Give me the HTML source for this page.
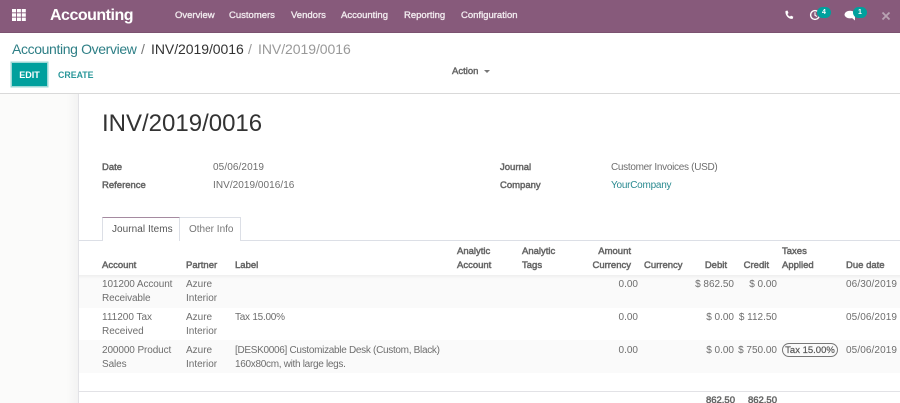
<!DOCTYPE html>
<html><head><meta charset="utf-8">
<style>
html,body{margin:0;padding:0}
body{width:900px;height:403px;overflow:hidden;background:#fff;position:relative;font-family:"Liberation Sans",sans-serif;font-size:10px;color:#666}
#r{position:absolute;left:0;top:0;width:900px;height:403px;overflow:hidden;filter:blur(.3px)}
.t{position:absolute;white-space:nowrap;line-height:14px}
.b{position:absolute;}
.n{color:#f1eaee;font-size:9.5px;-webkit-text-stroke:.35px #f1eaee;top:9px}
.h{color:#666;font-size:9.5px;-webkit-text-stroke:.5px #666}
.ra{text-align:right}
.l{color:#6e6e6e;font-size:10px}
.bd{position:absolute;background:#00a09d;color:#fff;border-radius:7px;font-size:7px;font-weight:bold;text-align:center;line-height:11px;height:11px;width:14px}
.bc{font-size:14px;line-height:17px;top:41px}
</style></head><body><div id="r">
<div class="b" style="left:0;top:0;width:900px;height:32px;background:#875a7b;border-bottom:1px solid #7b5270"></div>
<svg class="b" style="left:12px;top:9px" width="14" height="12"><g fill="#fff"><rect x="0" y="0" width="4" height="3.4"/><rect x="4.9" y="0" width="4" height="3.4"/><rect x="9.8" y="0" width="4" height="3.4"/><rect x="0" y="4.3" width="4" height="3.4"/><rect x="4.9" y="4.3" width="4" height="3.4"/><rect x="9.8" y="4.3" width="4" height="3.4"/><rect x="0" y="8.6" width="4" height="3.4"/><rect x="4.9" y="8.6" width="4" height="3.4"/><rect x="9.8" y="8.6" width="4" height="3.4"/></g></svg>
<div class="t" style="left:50px;top:8px;font-size:16px;font-weight:bold;color:#fff;line-height:16px;letter-spacing:-.5px">Accounting</div>
<div class="t n" style="left:175px">Overview</div>
<div class="t n" style="left:229px">Customers</div>
<div class="t n" style="left:291px">Vendors</div>
<div class="t n" style="left:341px">Accounting</div>
<div class="t n" style="left:404px">Reporting</div>
<div class="t n" style="left:461px">Configuration</div>
<svg class="b" style="left:784px;top:10px" width="10" height="10" viewBox="0 0 10 10"><path d="M1.5 1 L3.5.5 L4.5 3 L3.5 4 C4 5.5 5 6.2 6 6.6 L7 5.6 L9.3 6.8 L8.7 8.8 C5 9.6 .8 5.5 1.5 1Z" fill="#fff"/></svg>
<svg class="b" style="left:809px;top:9px" width="12" height="12" viewBox="0 0 12 12"><circle cx="6" cy="6" r="4.4" fill="none" stroke="#fff" stroke-width="1.4"/><path d="M6 3.2V6.3L8 7.5" fill="none" stroke="#fff" stroke-width="1.1"/></svg>
<div class="bd" style="left:817px;top:7px">4</div>
<svg class="b" style="left:844px;top:10px" width="14" height="12" viewBox="0 0 14 12"><ellipse cx="6" cy="4.6" rx="5.5" ry="3.8" fill="#fff"/><path d="M8 8L11 10.5V6Z" fill="#fff"/></svg>
<div class="bd" style="left:853px;top:7px">1</div>
<svg class="b" style="left:881px;top:11px" width="10" height="10" viewBox="0 0 10 10"><path d="M1.5 1.5L8.5 8.5M8.5 1.5L1.5 8.5" stroke="#b9a3b3" stroke-width="1.8"/></svg>

<div class="t bc" style="left:12px;color:#2e7f86;letter-spacing:-.37px">Accounting Overview</div>
<div class="t bc" style="left:141px;color:#777">/</div>
<div class="t bc" style="left:151px;color:#333;letter-spacing:-.05px">INV/2019/0016</div>
<div class="t bc" style="left:248px;color:#999">/</div>
<div class="t bc" style="left:258px;color:#999;letter-spacing:-.05px">INV/2019/0016</div>

<div class="b" style="left:12px;top:63px;width:35px;height:23px;background:#00a09d;box-shadow:0 0 0 1.5px #9ed8d6"></div>
<div class="t" style="left:12px;top:68px;width:35px;text-align:center;color:#fff;font-weight:bold;font-size:9px">EDIT</div>
<div class="t" style="left:58px;top:68px;color:#2a979a;font-weight:bold;font-size:8.8px">CREATE</div>
<div class="t" style="left:452px;top:65px;color:#666;font-size:9.5px;-webkit-text-stroke:.45px #666">Action</div>
<div class="b" style="left:484px;top:70px;width:0;height:0;border-left:3.5px solid transparent;border-right:3.5px solid transparent;border-top:3.5px solid #777"></div>
<div class="b" style="left:0;top:93px;width:900px;height:1px;background:#d9d9d9"></div>
<div class="b" style="left:0;top:94px;width:78px;height:309px;background:linear-gradient(90deg,#fbfbfa 0,#fbfbfa 85%,#f3f3f3 100%)"></div>
<div class="b" style="left:78px;top:94px;width:1px;height:309px;background:#e2e2e6"></div>

<div class="t" style="left:102px;top:109px;font-size:24px;line-height:30px;color:#333">INV/2019/0016</div>

<div class="t h" style="left:102px;top:161px">Date</div>
<div class="t l" style="left:213px;top:161px;letter-spacing:.1px">05/06/2019</div>
<div class="t h" style="left:102px;top:179px">Reference</div>
<div class="t l" style="left:213px;top:179px;letter-spacing:.05px">INV/2019/0016/16</div>
<div class="t h" style="left:500px;top:161px">Journal</div>
<div class="t l" style="left:611px;top:161px;letter-spacing:-.3px">Customer Invoices (USD)</div>
<div class="t h" style="left:500px;top:179px">Company</div>
<div class="t" style="left:611px;top:179px;color:#2a8a90;letter-spacing:-.25px">YourCompany</div>

<div class="b" style="left:79px;top:240px;width:821px;height:1px;background:#dcdfe6"></div>
<div class="b" style="left:102px;top:217px;width:78px;height:24px;background:#fff;border:1px solid #dcdfe6;border-top-color:#a58aa0;border-bottom:0;box-sizing:border-box"></div>
<div class="t" style="left:112px;top:223px;color:#555;letter-spacing:.05px">Journal Items</div>
<div class="b" style="left:180px;top:217px;width:61px;height:24px;background:#fff;border:1px solid #dcdfe6;border-left:0;border-bottom:0;box-sizing:border-box"></div>
<div class="t" style="left:189px;top:223px;color:#777">Other Info</div>

<div class="b" style="left:79px;top:275px;width:821px;height:33px;background:#fafafa"></div>
<div class="b" style="left:79px;top:340px;width:821px;height:33px;background:#fafafa"></div>
<div class="b" style="left:79px;top:275px;width:821px;height:4px;background:linear-gradient(#eeeeee,#fafafa)"></div>

<div class="t h" style="left:102px;top:259px">Account</div>
<div class="t h" style="left:186px;top:259px">Partner</div>
<div class="t h" style="left:235px;top:259px">Label</div>
<div class="t h" style="left:457px;top:245px;line-height:14px">Analytic<br>Account</div>
<div class="t h" style="left:522px;top:245px;line-height:14px">Analytic<br>Tags</div>
<div class="t h ra" style="left:581px;width:50px;top:245px;line-height:14px">Amount<br>Currency</div>
<div class="t h" style="left:644px;top:259px">Currency</div>
<div class="t h ra" style="left:687px;width:40px;top:259px">Debit</div>
<div class="t h ra" style="left:729px;width:40px;top:259px">Credit</div>
<div class="t h" style="left:782px;top:245px;line-height:14px">Taxes<br>Applied</div>
<div class="t h" style="left:846px;top:259px">Due date</div>

<div class="t l" style="left:102px;top:278px;letter-spacing:-.1px">101200 Account<br>Receivable</div>
<div class="t l" style="left:186px;top:278px">Azure<br>Interior</div>
<div class="t l ra" style="left:598px;width:40px;top:278px">0.00</div>
<div class="t l ra" style="left:674px;width:60px;top:278px">$ 862.50</div>
<div class="t l ra" style="left:717px;width:60px;top:278px">$ 0.00</div>
<div class="t l" style="left:846px;top:278px;letter-spacing:.1px">06/30/2019</div>

<div class="t l" style="left:102px;top:311px">111200 Tax<br>Received</div>
<div class="t l" style="left:186px;top:311px">Azure<br>Interior</div>
<div class="t l" style="left:235px;top:311px;letter-spacing:-.25px">Tax 15.00%</div>
<div class="t l ra" style="left:598px;width:40px;top:311px">0.00</div>
<div class="t l ra" style="left:674px;width:60px;top:311px">$ 0.00</div>
<div class="t l ra" style="left:717px;width:60px;top:311px">$ 112.50</div>
<div class="t l" style="left:846px;top:311px;letter-spacing:.1px">05/06/2019</div>

<div class="t l" style="left:102px;top:344px;letter-spacing:-.1px">200000 Product<br>Sales</div>
<div class="t l" style="left:186px;top:344px">Azure<br>Interior</div>
<div class="t l" style="left:235px;top:344px;letter-spacing:-.3px">[DESK0006] Customizable Desk (Custom, Black)<br>160x80cm, with large legs.</div>
<div class="t l ra" style="left:598px;width:40px;top:344px">0.00</div>
<div class="t l ra" style="left:674px;width:60px;top:344px">$ 0.00</div>
<div class="t l ra" style="left:717px;width:60px;top:344px">$ 750.00</div>
<div class="b" style="left:782px;top:343px;width:56px;height:14px;border:1px solid #777;border-radius:7px;box-sizing:border-box"></div>
<div class="t" style="left:782px;width:56px;text-align:center;top:344px;color:#555;font-size:9.5px;-webkit-text-stroke:.2px #555">Tax 15.00%</div>
<div class="t l" style="left:846px;top:344px;letter-spacing:.1px">05/06/2019</div>

<div class="b" style="left:79px;top:391px;width:821px;height:1px;background:#e2e2e6"></div>
<div class="t h ra" style="left:675px;width:60px;top:394px">862.50</div>
<div class="t h ra" style="left:717px;width:60px;top:394px">862.50</div>
</div></body></html>
